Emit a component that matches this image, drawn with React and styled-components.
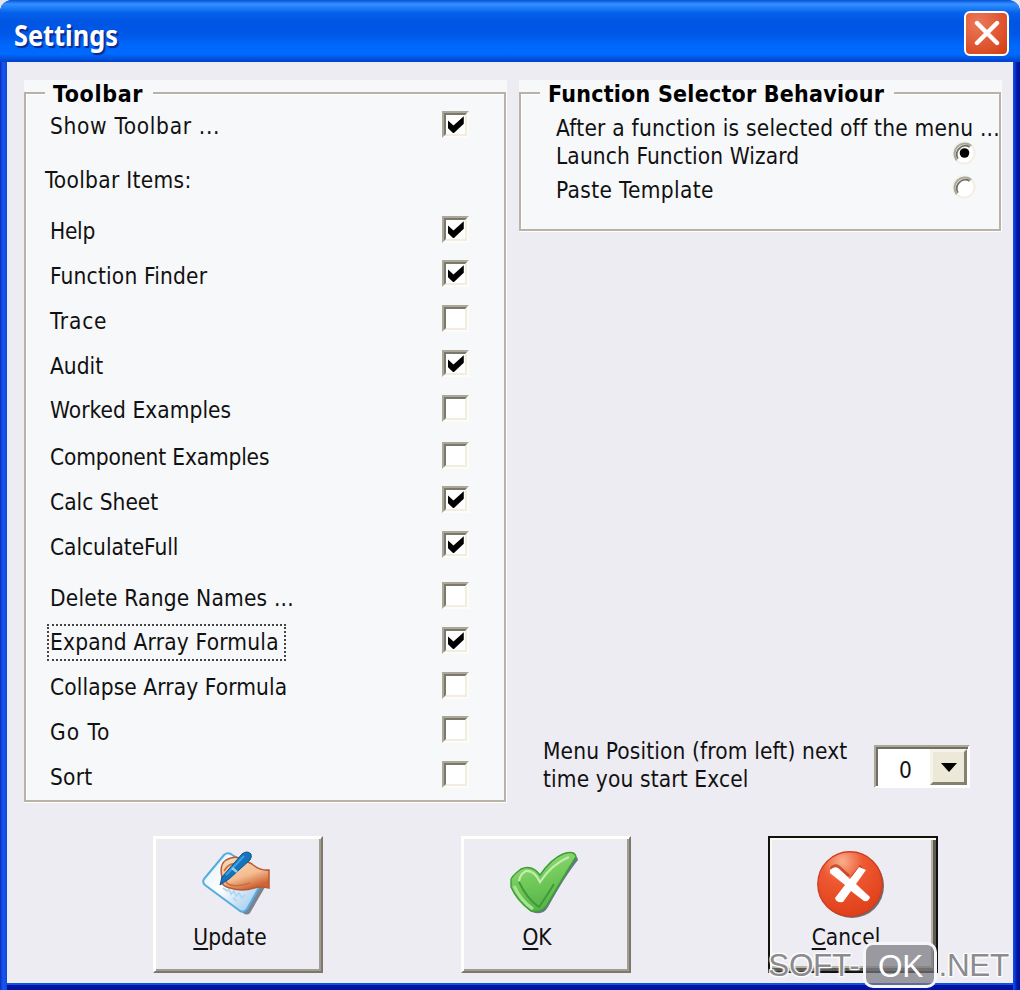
import styled, { createGlobalStyle } from 'styled-components'
import React from 'react'

const items = [
  { label: 'Help', checked: true, spacing: -0.3 },
  { label: 'Function Finder', checked: true, spacing: 0.18 },
  { label: 'Trace', spacing: 0.8 },
  { label: 'Audit', checked: true, spacing: 0 },
  { label: 'Worked Examples', spacing: 0.05 },
  { label: 'Component Examples', gap: 2, spacing: -0.17 },
  { label: 'Calc Sheet', checked: true, spacing: 0 },
  { label: 'CalculateFull', checked: true, spacing: -0.05 },
  { label: 'Delete Range Names ...', gap: 6, spacing: 0.2 },
  { label: 'Expand Array Formula', checked: true, focused: true, spacing: 0.2 },
  { label: 'Collapse Array Formula', spacing: 0.1 },
  { label: 'Go To', spacing: 1 },
  { label: 'Sort', spacing: 0.2 },
]

const Check = ({ checked }) => (
  <StyledCheck>
    <StyledCheckInner>
      {checked && (
        <svg width="16" height="16" viewBox="0 0 7 7" overflow="visible">
          <path d="M0 1.5 L2.4 3.7 L6.9 -0.3 V2.9 L2.6 7 H2.2 L0 4.9 Z" fill="#000" />
        </svg>
      )}
    </StyledCheckInner>
  </StyledCheck>
)

const Radio = ({ checked }) => (
  <svg width="26" height="26" viewBox="0 0 26 26">
    <circle cx="13" cy="13" r="10.5" fill="#fff" stroke="#f3efe4" strokeWidth="2" />
    <path d="M5.7 20.3 A10.4 10.4 0 0 1 20.3 5.7" fill="none" stroke="#aca899" strokeWidth="2" />
    <path d="M6.9 18.6 A8.6 8.6 0 0 1 18.6 6.9" fill="none" stroke="#716f64" strokeWidth="1.8" />
    {checked && <circle cx="13.5" cy="13" r="4.8" fill="#000" />}
  </svg>
)

const UpdateIcon = () => (
  <svg width="72" height="68" viewBox="2 -1 72 68" overflow="visible">
    <defs>
      <linearGradient id="paper" x1="0" y1="0" x2="1" y2="1">
        <stop offset="0" stopColor="#d9effc" />
        <stop offset="0.45" stopColor="#ffffff" />
        <stop offset="1" stopColor="#86bdea" />
      </linearGradient>
      <linearGradient id="hand" x1="0" y1="0" x2="0.5" y2="1">
        <stop offset="0" stopColor="#fbdcb8" />
        <stop offset="0.65" stopColor="#f3bd90" />
        <stop offset="1" stopColor="#cf6434" />
      </linearGradient>
    </defs>
    <path d="M6 32 L27 5 Q30 2 34 4 L66 30 L48 61 Q45 64 41 61 L6 35 Z" fill="#4f5664" opacity="0.7" transform="translate(2 1)" />
    <path d="M4 28 L24 4 Q27 1 31 3 L64 28 L47 58 Q44 62 40 60 L5 34 Q2 31 4 28 Z" fill="url(#paper)" stroke="#55ace0" strokeWidth="2" />
    <path d="M23 37 l4 3 2 -2 2 5 3 -3 2 5 3 -3 3 5 3 -3 M33 47 l4 3" fill="none" stroke="#b4d7f0" strokeWidth="2" />
    <path d="M22 26 Q19 14 26 9 Q35 4 42 8 L52 13 Q60 20 69 19 V37 Q61 35 54 37 Q42 41 30 37 Q22 35 22 31 Z" fill="url(#hand)" stroke="#b55a35" strokeWidth="1.5" />
    <path d="M24 20 Q29 11 38 13 M26 24 Q24 30 28 33 Q36 37 50 32" fill="none" stroke="#c96f43" strokeWidth="1.6" />
    <path d="M20 34 L22 26 L42 3 Q47 -1 51 3 Q52 6 50 9 L29 28 Z" fill="#1373bd" stroke="#0d548f" strokeWidth="1" />
    <path d="M26 24 L44 5" stroke="#3f9fdc" strokeWidth="2.4" />
    <path d="M32 17 L37 21" stroke="#8fd0f2" strokeWidth="2.4" />
  </svg>
)

const OkIcon = () => (
  <svg width="72" height="68" viewBox="1 -1 72 68" overflow="visible">
    <defs>
      <linearGradient id="tick" x1="0" y1="0" x2="0.3" y2="1">
        <stop offset="0" stopColor="#a4dd88" />
        <stop offset="0.5" stopColor="#73cb5b" />
        <stop offset="1" stopColor="#58b54a" />
      </linearGradient>
    </defs>
    <path d="M5 32 Q4 24 15 18 Q24 15 30 26 Q42 7 56 3 Q68 0 69 7 Q56 23 39 54 Q34 63 23 59 Q12 53 5 32 Z" fill="#2f4360" opacity="0.7" transform="translate(0 2)" />
    <path d="M2 30 Q1 26 12 18 Q23 13 31 24 Q42 8 54 3 Q66 -1 67 6 Q56 23 38 54 Q33 62 22 60 Q8 50 2 36 Z" fill="url(#tick)" stroke="#3b9f35" strokeWidth="1.4" />
    <path d="M10 30 Q11 23 17 20 Q25 19 31 31 Q43 13 60 6" fill="none" stroke="#c2edac" strokeWidth="2.2" />
    <path d="M10 31 Q18 48 30 56 Q37 46 45 33" fill="none" stroke="#3c9a37" strokeWidth="1.8" />
    <path d="M5 35 Q12 50 24 58" fill="none" stroke="#a8e292" strokeWidth="3" />
  </svg>
)

const CancelIcon = () => (
  <svg width="72" height="68" viewBox="2 0 72 68" overflow="visible">
    <defs>
      <radialGradient id="ball" cx="0.38" cy="0.15" r="0.8">
        <stop offset="0" stopColor="#f9b08e" />
        <stop offset="0.4" stopColor="#ee5a33" />
        <stop offset="1" stopColor="#e1421c" />
      </radialGradient>
    </defs>
    <circle cx="37" cy="36" r="32" fill="#444" opacity="0.75" />
    <circle cx="35" cy="34" r="32.2" fill="url(#ball)" stroke="#cf3d1f" strokeWidth="1.4" />
    <path d="M16 19 Q19 14 24 17 L34 26 M37 27 L46 16" fill="none" stroke="#b93418" strokeWidth="3" opacity="0.7" />
    <path d="M15 20 Q19 16 23 18 L35 29 L44 17 L51 20 L41 34 L55 47 Q54 52 49 51 L36 41 L28 52 Q21 53 20 48 L30 35 L15 23 Z" fill="#fff" />
  </svg>
)

const App = () => {
  return (
    <>
      <GlobalStyle />
      <StyledWindow>
        <StyledTitleBar>
          <StyledTitle>Settings</StyledTitle>
          <StyledClose>
            <svg width="26" height="26" viewBox="0 0 26 26">
              <path d="M3 3 L23 23 M23 3 L3 23" stroke="#fff" strokeWidth="4.4" strokeLinecap="round" />
            </svg>
          </StyledClose>
        </StyledTitleBar>
        <StyledBody>
          <StyledColumns>
            <StyledFrame $height={723}>
              <StyledBox>
                <StyledLegend $spacing={0.65}>Toolbar</StyledLegend>
                <StyledRow $gap={5}>
                  <StyledLabel $spacing={0.68}>Show Toolbar ...</StyledLabel>
                  <Check checked />
                </StyledRow>
                <StyledHeading>Toolbar Items:</StyledHeading>
                {items.map((item) => (
                  <StyledRow key={item.label} $gap={item.gap}>
                    <StyledLabel $focused={item.focused} $spacing={item.spacing}>{item.label}</StyledLabel>
                    <Check checked={item.checked} />
                  </StyledRow>
                ))}
              </StyledBox>
            </StyledFrame>
            <StyledSide>
              <StyledFrame $height={152}>
                <StyledBox>
                  <StyledLegend $spacing={0.23}>Function Selector Behaviour</StyledLegend>
                  <StyledNote>After a function is selected off the menu ...</StyledNote>
                  <StyledOption $spacing={0.1}>
                    <span>Launch Function Wizard</span>
                    <Radio checked />
                  </StyledOption>
                  <StyledOption $spacing={0.35}>
                    <span>Paste Template</span>
                    <Radio />
                  </StyledOption>
                </StyledBox>
              </StyledFrame>
              <StyledMenuPosition>
                <StyledMenuText>
                  Menu Position (from left) next
                  <br />
                  time you start Excel
                </StyledMenuText>
                <StyledSelect>
                  <StyledValue>0</StyledValue>
                  <StyledArrow>
                    <svg width="16" height="9" viewBox="0 0 16 9">
                      <path d="M0 0 H16 L8 9 Z" fill="#000" />
                    </svg>
                  </StyledArrow>
                </StyledSelect>
              </StyledMenuPosition>
            </StyledSide>
          </StyledColumns>
          <StyledButtons>
            <StyledButton>
              <UpdateIcon />
              <StyledCaption $shift={-16}><u>U</u>pdate</StyledCaption>
            </StyledButton>
            <StyledButton>
              <OkIcon />
              <StyledCaption $shift={-17}><u>O</u>K</StyledCaption>
            </StyledButton>
            <StyledButton $default>
              <CancelIcon />
              <StyledCaption $shift={-14}><u>C</u>ancel</StyledCaption>
            </StyledButton>
          </StyledButtons>
        </StyledBody>
        <StyledWatermark>
          <span>SOFT-</span>
          <StyledBadge>OK</StyledBadge>
          <span>.NET</span>
        </StyledWatermark>
      </StyledWindow>
    </>
  )
}

export default App

const GlobalStyle = createGlobalStyle`
  body {
    margin: 0;
    background: #e4e6ee;
    overflow: hidden;
  }
  * {
    box-sizing: border-box;
  }
  svg {
    display: block;
    flex-shrink: 0;
  }
`

const StyledWindow = styled.div`
  position: relative;
  width: 1020px;
  height: 990px;
  display: flex;
  flex-direction: column;
  border-radius: 12px 12px 0 0;
  overflow: hidden;
  background: linear-gradient(90deg, #0a2cc4 0, #1a56ea 3px, #0d4ce0 7px, #0d4ce0 1013px, #1048e0 1014px, #0018a8 1017px, #00109a 1020px);
  font-family: 'DejaVu Sans Condensed', 'DejaVu Sans', sans-serif;
  font-stretch: condensed;
  font-size: 22.5px;
  color: #111;
  white-space: nowrap;
`

const StyledTitleBar = styled.div`
  height: 62px;
  flex-shrink: 0;
  padding: 0 11px 0 14px;
  display: flex;
  align-items: center;
  justify-content: space-between;
  background: linear-gradient(#0a50d8 0, #3191ff 4px, #2482fa 7px, #0560ea 13px, #0055e2 22px, #0058e8 34px, #0068fc 46px, #006aff 54px, #0050dd 59px, #0040cc 62px);
`

const StyledTitle = styled.h1`
  margin: 7px 0 0;
  font-family: 'Noto Sans', 'Open Sans', sans-serif;
  font-size: 28px;
  font-weight: bold;
  line-height: 36px;
  color: #fff;
  text-shadow: 2px 2px 1px #0a2a90;
  transform: scaleX(0.905);
  transform-origin: left;
`

const StyledClose = styled.div`
  width: 45px;
  height: 45px;
  margin-top: 4px;
  display: flex;
  align-items: center;
  justify-content: center;
  border: 2px solid #fff;
  border-radius: 6px;
  background: radial-gradient(circle at 30% 25%, #ea7a5a, #e05a36 50%, #d23c10);
`

const StyledBody = styled.div`
  flex: 1;
  margin: 0 7px 5px;
  padding: 18px 11px 0 17px;
  background: #edecf2;
  border-bottom: 2px solid #1450e0;
  box-shadow: 0 5px 0 #0014a0;
`

const StyledColumns = styled.div`
  display: flex;
  gap: 12px;
`

const StyledFrame = styled.div`
  width: 483px;
  height: ${(props) => props.$height}px;
  padding: 12px 1px 1px 0;
  background: #f7f8fa;
`

const StyledBox = styled.div`
  height: 100%;
  padding-left: 24px;
  border: 2px solid #b8b3a6;
  box-shadow: inset 1px 1px 0 #fff, 1px 1px 0 #fff;
`

const StyledLegend = styled.div`
  width: fit-content;
  height: 17px;
  margin: -14px 0 0 -5px;
  padding: 0 10px 0 8px;
  background: #f7f8fa;
  font-size: 23px;
  font-weight: bold;
  line-height: 28px;
  letter-spacing: ${(props) => props.$spacing}px;
  color: #000;
`

const StyledRow = styled.div`
  height: 44.8px;
  margin-top: ${(props) => props.$gap || 0}px;
  padding-right: 35px;
  display: flex;
  align-items: center;
  justify-content: space-between;
`

const StyledLabel = styled.span`
  margin: 5px 0 0 -3px;
  padding: 0 5px 1px 1px;
  line-height: 32px;
  letter-spacing: ${(props) => props.$spacing}px;
  border: 2px dotted ${(props) => (props.$focused ? '#444' : 'transparent')};
`

const StyledHeading = styled.div`
  height: 60px;
  margin-left: -5px;
  padding-top: 17px;
  line-height: 33px;
  letter-spacing: 0.3px;
`

const StyledCheck = styled.div`
  width: 27px;
  height: 27px;
  border: 2px solid;
  border-color: #aca899 #fdfcf8 #fdfcf8 #aca899;
`

const StyledCheckInner = styled.div`
  width: 23px;
  height: 23px;
  padding: 2px;
  border: 2px solid;
  border-color: #7b786c #f1ede0 #f1ede0 #7b786c;
  background: #fff;
`

const StyledSide = styled.div`
  display: flex;
  flex-direction: column;
  justify-content: space-between;
`

const StyledNote = styled.div`
  margin: 17px 0 0 11px;
  line-height: 28px;
  letter-spacing: 0.23px;
`

const StyledOption = styled.div`
  height: 34px;
  padding: 0 22px 0 11px;
  display: flex;
  align-items: flex-start;
  justify-content: space-between;
  line-height: 28px;
  letter-spacing: ${(props) => props.$spacing}px;

  svg {
    margin-top: -2px;
  }
`

const StyledMenuPosition = styled.div`
  padding: 0 32px 10px 24px;
  display: flex;
  align-items: center;
  justify-content: space-between;
`

const StyledMenuText = styled.div`
  line-height: 28px;
  letter-spacing: 0.13px;
`

const StyledSelect = styled.div`
  width: 96px;
  height: 43px;
  margin-top: 3px;
  display: flex;
  border: 2px solid;
  border-color: #aca899 #fff #fff #aca899;
  background: #fff;
  box-shadow: inset 2px 2px 0 #716f64;
`

const StyledValue = styled.div`
  flex: 1;
  padding: 7px 0 0 5px;
  text-align: center;
  line-height: 33px;
`

const StyledArrow = styled.div`
  width: 37px;
  height: 36px;
  margin: 2px 1px 0 0;
  display: flex;
  align-items: center;
  justify-content: center;
  border: 3px solid;
  border-color: #f6f4e8 #85816f #85816f #f6f4e8;
  background: #ece9d8;
`

const StyledButtons = styled.div`
  margin: 33px 0 0 129px;
  display: flex;
  gap: 137.5px;
`

const StyledButton = styled.div`
  width: 170px;
  height: 137px;
  padding-top: 12px;
  display: flex;
  flex-direction: column;
  align-items: center;
  border: ${(props) => (props.$default ? '2px solid #111' : '2px solid')};
  ${(props) => !props.$default && 'border-color: #fffefa #7c786e #7c786e #fffefa;'}
  box-shadow: ${(props) => (props.$default
    ? 'inset 2px 2px 0 #fbf9f0, inset -3px -3px 0 #5f5c52, inset -5px -5px 0 #b5b1a4'
    : 'inset 1px 1px 0 #fffefa, inset -2px -2px 0 #a19d91')};
`

const StyledCaption = styled.span`
  margin: 5px 0 0 ${(props) => props.$shift}px;
  line-height: 28px;

  u {
    text-decoration-thickness: 2px;
    text-underline-offset: 3px;
  }
`

const StyledWatermark = styled.div`
  position: absolute;
  right: 11px;
  bottom: 2px;
  display: flex;
  align-items: center;
  font-family: 'Liberation Sans', Arial, sans-serif;
  font-size: 31.5px;
  line-height: 46px;
  letter-spacing: -0.3px;
  color: #8c8c90;
  text-shadow: -1px -1px 1px #fff, 1px -1px 1px #fff, -1px 1px 1px #fff, 1px 1px 1px #fff, 0 0 3px #fff;
`

const StyledBadge = styled.span`
  width: 74px;
  height: 46px;
  margin: 0 1px 0 4px;
  border: 3px solid #f6f6f8;
  border-radius: 10px;
  background: rgba(120, 120, 126, 0.72);
  line-height: 42px;
  text-align: center;
  color: #fff;
  text-shadow: none;
`
